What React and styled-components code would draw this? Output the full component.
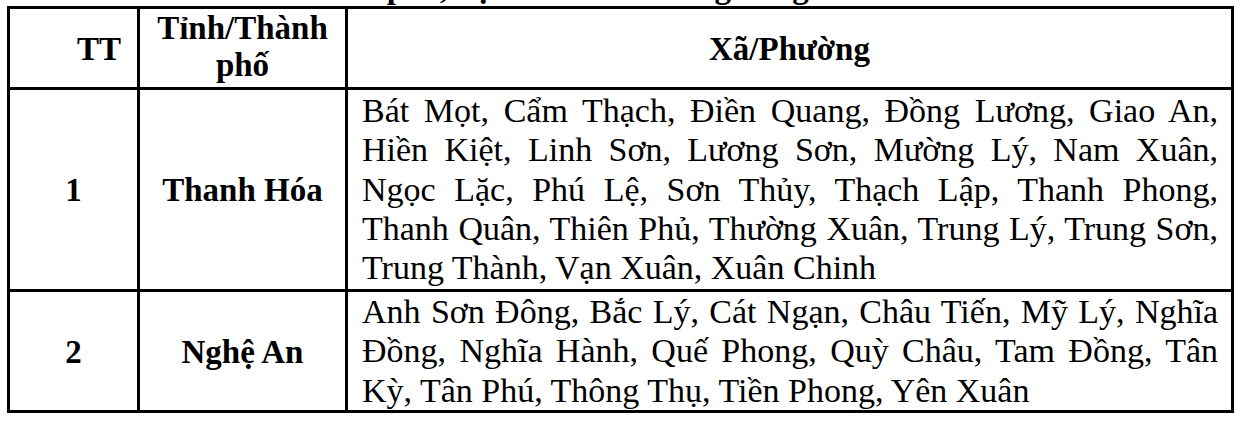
import React from "react";
import styled, { createGlobalStyle } from "styled-components";

const GlobalStyle = createGlobalStyle`
  html, body {
    margin: 0;
    padding: 0;
    background: #ffffff;
    overflow: hidden;
  }
  body {
    font-family: "Liberation Serif", "Times New Roman", serif;
    color: #000000;
  }
`;

const Page = styled.div`
  display: flex;
  flex-direction: column;
  width: 1246px;
  height: 422px;
`;

const Title = styled.div`
  margin-top: -32px;
  padding-left: 21px;
  height: 38px;
  font-size: 33px;
  line-height: 38px;
  font-weight: 700;
  white-space: nowrap;
`;

const Table = styled.table`
  border-collapse: separate;
  border-spacing: 0;
  table-layout: fixed;
  width: 1227px;
  margin: 0 0 0 7px;
  border-top: 3px solid #000;
  border-left: 3px solid #000;
`;

const HeadCell = styled.th`
  box-sizing: border-box;
  width: ${(p) => p.$w}px;
  height: 81px;
  padding: ${(p) => p.$pt}px ${(p) => p.$pr || 0}px 0 0;
  border-right: 3px solid #000;
  border-bottom: 3px solid #000;
  vertical-align: top;
  text-align: ${(p) => p.$align || "center"};
  font-size: 33px;
  line-height: 37px;
  font-weight: 700;
`;

const LabelCell = styled.td`
  box-sizing: border-box;
  height: ${(p) => p.$h}px;
  padding: ${(p) => p.$pt}px 0 0 0;
  border-right: 3px solid #000;
  border-bottom: 3px solid #000;
  vertical-align: top;
  text-align: center;
  font-size: 33px;
  line-height: 37px;
  font-weight: 700;
`;

const ListCell = styled.td`
  box-sizing: border-box;
  height: ${(p) => p.$h}px;
  padding: ${(p) => p.$pt}px 13px 0 14px;
  border-right: 3px solid #000;
  border-bottom: 3px solid #000;
  vertical-align: top;
  font-size: 34px;
  line-height: 39.3px;
  font-weight: 400;
`;

const Line = styled.span`
  display: block;
  text-align: ${(p) => (p.$last ? "left" : "justify")};
  text-align-last: ${(p) => (p.$last ? "left" : "justify")};
`;

const rows = [
  {
    no: "1",
    province: "Thanh Hóa",
    height: 202,
    labelPad: 82,
    listPad: 1,
    lines: [
      "Bát Mọt, Cẩm Thạch, Điền Quang, Đồng Lương, Giao An,",
      "Hiền Kiệt, Linh Sơn, Lương Sơn, Mường Lý, Nam Xuân,",
      "Ngọc Lặc, Phú Lệ, Sơn Thủy, Thạch Lập, Thanh Phong,",
      "Thanh Quân, Thiên Phủ, Thường Xuân, Trung Lý, Trung Sơn,",
      "Trung Thành, Vạn Xuân, Xuân Chinh",
    ],
  },
  {
    no: "2",
    province: "Nghệ An",
    height: 121,
    labelPad: 42,
    listPad: 0,
    lines: [
      "Anh Sơn Đông, Bắc Lý, Cát Ngạn, Châu Tiến, Mỹ Lý, Nghĩa",
      "Đồng, Nghĩa Hành, Quế Phong, Quỳ Châu, Tam Đồng, Tân",
      "Kỳ, Tân Phú, Thông Thụ, Tiền Phong, Yên Xuân",
    ],
  },
];

export default function App() {
  return (
    <Page>
      <GlobalStyle />
      <Title>Danh sách các tỉnh thành phố, độ cao nhất ở trong vùng</Title>
      <Table>
        <thead>
          <tr>
            <HeadCell $w={130} $pt={22} $pr={16} $align="right">
              TT
            </HeadCell>
            <HeadCell $w={208} $pt={1}>
              Tỉnh/Thành
              <br />
              phố
            </HeadCell>
            <HeadCell $w={886} $pt={22}>
              Xã/Phường
            </HeadCell>
          </tr>
        </thead>
        <tbody>
          {rows.map((r) => (
            <tr key={r.no}>
              <LabelCell $h={r.height} $pt={r.labelPad}>
                {r.no}
              </LabelCell>
              <LabelCell $h={r.height} $pt={r.labelPad}>
                {r.province}
              </LabelCell>
              <ListCell $h={r.height} $pt={r.listPad}>
                {r.lines.map((l, i) => (
                  <Line key={i} $last={i === r.lines.length - 1}>
                    {l}
                  </Line>
                ))}
              </ListCell>
            </tr>
          ))}
        </tbody>
      </Table>
    </Page>
  );
}
